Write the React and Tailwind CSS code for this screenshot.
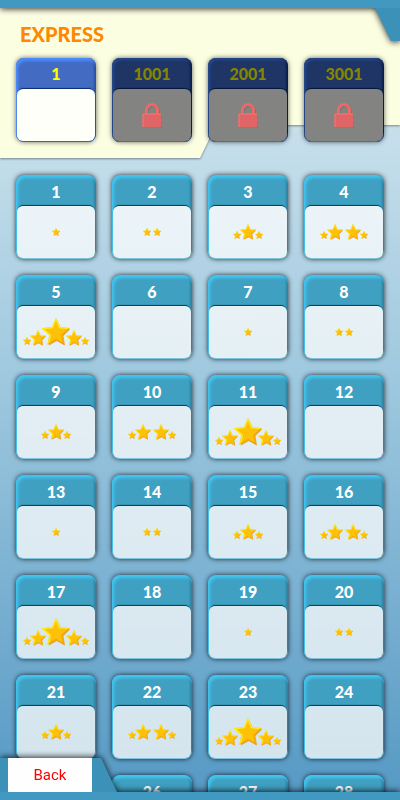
import clsx from 'clsx';

const packs = [
  { start: 1, locked: false },
  { start: 1001, locked: true },
  { start: 2001, locked: true },
  { start: 3001, locked: true },
];

const starRows = [
  ['sm'],
  ['sm', 'sm'],
  ['sm', 'md', 'sm'],
  ['sm', 'md', 'md', 'sm'],
  ['sm', 'md', 'lg', 'md', 'sm'],
  [],
];

const starSizes = {
  sm: 'size-2 -mx-0.5 mb-px',
  md: 'size-4 mx-px',
  lg: 'size-7 -mx-[5px]',
};

// The cell of level 25 lies under the back tab and stays empty
const levels = Array.from({ length: 28 }, (_, i) => ({
  number: i + 1,
  stars: starRows[i % 6],
})).filter((level) => level.number !== 25);

function Star({ size }) {
  return (
    <svg viewBox="0 0 28 28" aria-hidden="true" className={clsx('shrink-0', starSizes[size])}>
      <path d="M15 2l4 8 9 1.500-6.500 6.500 1.500 9.500-8-4.500-8 4.500 1.500-9.500L1.500 11.500l9-1.500z" fill="#c98a1c" opacity=".65" />
      <path d="M14 0l4 9 10 1.200-7.300 6.500L22.600 27 14 22.300 5.400 27l1.900-10.300L0 10.200 10 9z" fill="#ffc107" />
      <path d="M14 1l-3.500 8.600L1 10.800l7.300 6.500L6.500 26M14 1l3.500 8.600 9 1" fill="none" stroke="#ffe91f" strokeWidth="1.500" />
      <path d="M27 10.700l-7.300 6.500L21.600 26 14 21.500 6.500 26" fill="none" stroke="#f2a20b" strokeWidth="1.200" />
    </svg>
  );
}

function Lock() {
  return (
    <svg viewBox="0 0 22 26" aria-hidden="true" className="h-[26px] w-[22px]">
      <path d="M5.500 13V8.500a5.500 6 0 0 1 11 0V13" fill="none" stroke="#555" strokeOpacity=".4" strokeWidth="3" transform="translate(.7 .8)" />
      <path d="M5.500 13V8.500a5.500 6 0 0 1 11 0V13" fill="none" stroke="#ed6868" strokeWidth="3" />
      <rect x="2" y="12" width="19" height="14" rx="1" fill="#666" opacity=".5" />
      <rect x="1.500" y="11.500" width="19" height="14" rx="1" fill="#e06666" />
      <path d="M2 25V12h18" fill="none" stroke="#f47676" />
    </svg>
  );
}

function Card({ label, disabled, cardClass, labelClass, bodyClass, children }) {
  return (
    <button
      type="button"
      disabled={disabled}
      className={clsx('flex h-[84px] min-w-0 flex-col rounded-lg p-px text-center', cardClass)}
    >
      <span className={clsx('block h-[30px] w-full shrink-0 text-base leading-[30px] font-black', labelClass)}>
        {label}
      </span>
      <span className={clsx('flex w-full flex-1 items-center justify-center rounded-md', bodyClass)}>
        {children}
      </span>
    </button>
  );
}

export default function App() {
  return (
    <div className="relative flex h-screen flex-col overflow-hidden bg-linear-to-b from-[#dcebf2] via-[#9bc6dd] to-[#5599c4] font-['Lato',sans-serif]">
      {/* Top bar */}
      <div className="absolute inset-x-0 top-0 z-10 drop-shadow-[0_1px_3px_rgba(0,0,0,0.8)]">
        <div className="h-2 bg-[#4199c1]" />
        <div className="ml-auto h-[33px] w-[25px] bg-[#3c91b8] [clip-path:polygon(0_0,100%_0,100%_100%,16px_100%)]" />
      </div>

      {/* Packs */}
      <header className="relative shrink-0 px-4 pt-6 pb-4">
        <div className="absolute inset-0 drop-shadow-[0_1px_1px_rgba(0,0,0,0.4)]">
          <div className="h-full bg-[#fcfee2] [clip-path:polygon(0_0,100%_0,100%_125px,216px_125px,200px_100%,0_100%)]" />
        </div>
        <h1 className="relative px-1 text-xl leading-5 font-black text-[#ff8800]">EXPRESS</h1>
        <div className="relative mt-3.5 grid grid-cols-4 gap-4">
          {packs.map((pack) => (
            <Card
              key={pack.start}
              label={pack.start}
              disabled={pack.locked}
              cardClass={
                pack.locked
                  ? 'bg-[#1e3566] shadow-[0_0_5px_rgba(0,0,0,0.6),inset_0_-1px_0_#5a6a94,inset_2px_2px_3px_#244a8c,inset_-2px_0_2px_#0b1c48]'
                  : 'bg-[#426bc1] shadow-[0_0_5px_rgba(0,0,0,0.6),inset_2px_3px_3px_#4d8cff,inset_-2px_0_2px_#2b50a0]'
              }
              labelClass={pack.locked ? 'text-[#858500]' : 'text-[#ffff00]'}
              bodyClass={
                pack.locked
                  ? 'bg-[#838381] shadow-[0_-2px_1px_-1px_#061439]'
                  : 'bg-[#fffffa] shadow-[0_-2px_1px_-1px_#0b2a70]'
              }
            >
              {pack.locked && <Lock />}
            </Card>
          ))}
        </div>
      </header>

      {/* Levels */}
      <main className="grid grid-cols-4 gap-4 px-4 pt-[17px]">
        {levels.map((level) => (
          <Card
            key={level.number}
            label={level.number}
            cardClass={clsx(
              'bg-[#40a0c2] shadow-[0_0_5px_rgba(0,0,0,0.8),inset_0_-1px_0_#7fc3e0,inset_2px_3px_3px_#43c5f0,inset_-2px_0_2px_#2d829f]',
              level.number === 26 && 'col-start-2'
            )}
            labelClass="pt-px text-white"
            bodyClass="bg-linear-to-b from-[#f4f9fb] to-[#d2e4ed] bg-fixed shadow-[0_-2px_1px_-1px_#06394c]"
          >
            <span className={clsx('flex items-end', level.stars.length === 2 && 'gap-1.5')}>
              {level.stars.map((size, i) => (
                <Star key={i} size={size} />
              ))}
            </span>
          </Card>
        ))}
      </main>

      {/* Bottom bar */}
      <nav className="absolute inset-x-0 bottom-0 z-10 drop-shadow-[0_-1px_3px_rgba(0,0,0,0.8)]">
        <div className="h-[34px] w-[117px] bg-[#3c91b8] pl-2 [clip-path:polygon(0_0,101px_0,100%_100%,0_100%)]">
          <button
            type="button"
            className="h-full w-[84px] bg-[#fefefe] font-['Roboto',sans-serif] text-[15px] text-[#ff0000]"
          >
            Back
          </button>
        </div>
        <div className="h-2 bg-[#4199c1]" />
      </nav>
    </div>
  );
}
